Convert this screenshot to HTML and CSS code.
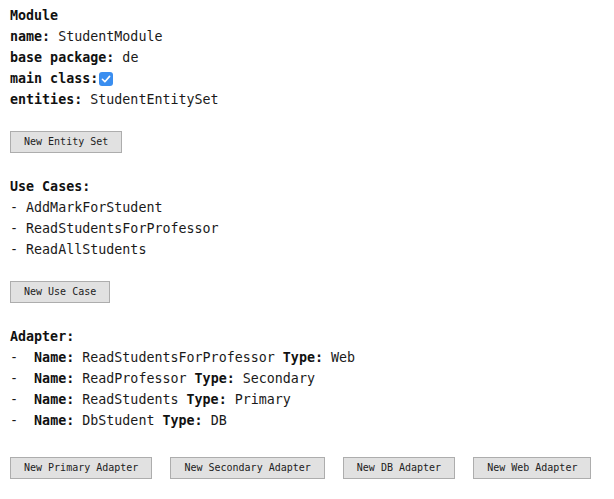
FILE: index.html
```html
<!DOCTYPE html>
<html>
<head>
<meta charset="utf-8">
<link rel="stylesheet" href="styles.css">
</head>
<body>
<div class="page">
  <section class="block">
    <div class="line"><b>Module</b></div>
    <div class="line"><b>name:</b> StudentModule</div>
    <div class="line"><b>base package:</b> de</div>
    <div class="line"><b>main class:</b><span class="check" role="checkbox" aria-checked="true"><svg width="14" height="14" viewBox="0 0 14 14"><rect x="0" y="0" width="14" height="14" rx="3" fill="#3a8ef0"/><path d="M3.4 7.3 L5.9 9.8 L10.6 4.4" fill="none" stroke="#fff" stroke-width="1.6" stroke-linecap="round" stroke-linejoin="round"/></svg></span></div>
    <div class="line"><b>entities:</b> StudentEntitySet</div>
  </section>
  <div class="actions"><button class="btn">New Entity Set</button></div>

  <section class="block">
    <div class="line"><b>Use Cases:</b></div>
    <div class="line">- AddMarkForStudent</div>
    <div class="line">- ReadStudentsForProfessor</div>
    <div class="line">- ReadAllStudents</div>
  </section>
  <div class="actions"><button class="btn">New Use Case</button></div>

  <section class="block">
    <div class="line"><b>Adapter:</b></div>
    <div class="line">-  <b>Name:</b> ReadStudentsForProfessor <b>Type:</b> Web</div>
    <div class="line">-  <b>Name:</b> ReadProfessor <b>Type:</b> Secondary</div>
    <div class="line">-  <b>Name:</b> ReadStudents <b>Type:</b> Primary</div>
    <div class="line">-  <b>Name:</b> DbStudent <b>Type:</b> DB</div>
  </section>
  <div class="actions last">
    <button class="btn">New Primary Adapter</button>
    <button class="btn">New Secondary Adapter</button>
    <button class="btn">New DB Adapter</button>
    <button class="btn">New Web Adapter</button>
  </div>
</div>
</body>
</html>
```

FILE: styles.css
```css
html, body {
  margin: 0;
  padding: 0;
  background: #ffffff;
}

.page {
  padding: 5px 10px 0 10px;
  font-family: "DejaVu Sans Mono", "Liberation Mono", monospace;
  font-size: 13.33px;
  color: #1a1a1a;
}

.block {
  display: flex;
  flex-direction: column;
}

.line {
  height: 21px;
  line-height: 21px;
  white-space: pre;
  display: flex;
  align-items: center;
}

.line b {
  font-weight: bold;
  color: #111;
}

.check {
  display: inline-flex;
  width: 14px;
  height: 14px;
  margin-left: 1px;
}

.actions {
  display: flex;
  gap: 18px;
  margin: 21px 0 23px 0;
}

.actions.last {
  margin-top: 26px;
}

.btn {
  font-family: "DejaVu Sans Mono", "Liberation Mono", monospace;
  font-size: 10px;
  line-height: 12px;
  color: #222;
  background: #e1e1e1;
  border: 1px solid #adadad;
  border-radius: 0;
  padding: 4px 13px;
  margin: 0;
}
```
